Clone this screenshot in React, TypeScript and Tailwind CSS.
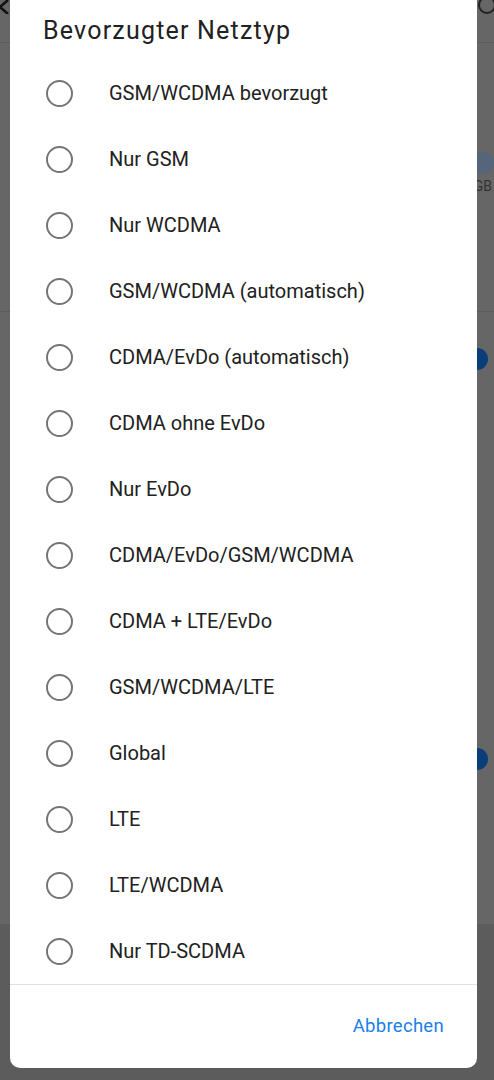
import React from 'react'

const options = [
  'GSM/WCDMA bevorzugt',
  'Nur GSM',
  'Nur WCDMA',
  'GSM/WCDMA (automatisch)',
  'CDMA/EvDo (automatisch)',
  'CDMA ohne EvDo',
  'Nur EvDo',
  'CDMA/EvDo/GSM/WCDMA',
  'CDMA + LTE/EvDo',
  'GSM/WCDMA/LTE',
  'Global',
  'LTE',
  'LTE/WCDMA',
  'Nur TD-SCDMA',
]

function Radio() {
  return (
    <span className="w-[27px] h-[27px] rounded-full border-[2.5px] border-[#757575] shrink-0" />
  )
}

export default function App() {
  return (
    <div
      className="relative w-[494px] h-[1080px] overflow-hidden bg-[#666666]"
      style={{ fontFamily: 'Roboto, "Liberation Sans", sans-serif' }}
    >
      {/* dimmed settings page behind the dialog */}
      <div className="flex flex-col h-full">
        <div className="h-[43px] flex items-start justify-between border-b border-[#5c5c5c]">
          <svg width="12" height="14" viewBox="0 0 12 14" className="ml-[-2px]">
            <path d="M10 0 L2 7 L10 14" fill="none" stroke="#111" strokeWidth="2.5" />
          </svg>
          <span className="w-[18px] h-[18px] rounded-full border-2 border-[#222] mt-[-4px] mr-[-2px]" />
        </div>
        <div className="h-[269px] border-b border-[#5c5c5c] flex flex-col items-end pt-[109px] pr-1">
          <span className="w-[22px] h-[22px] rounded-full bg-[#55657a] mr-[-4px]" />
          <span className="text-[#333] text-sm mt-[2px] mr-[-2px]">GB</span>
        </div>
        <div className="h-[613px] border-b border-[#5c5c5c] flex flex-col items-end pt-[36px]">
          <span className="w-[22px] h-[22px] rounded-full bg-[#0b3d78] mr-[6px]" />
          <span className="w-[22px] h-[22px] rounded-full bg-[#0b3d78] mr-[6px] mt-[378px]" />
        </div>
        <div className="flex-1 bg-[#5c5c5c]" />
      </div>

      {/* dialog */}
      <div className="absolute left-[10px] right-[17px] top-0 h-[1068px] bg-white rounded-b-[10px] flex flex-col">
        <div className="h-[60px] pl-[33px] pt-[14px] text-[25px] leading-[34px] tracking-[1.2px] text-[#212121]">
          Bevorzugter Netztyp
        </div>
        <div className="flex flex-col border-b border-[#e0e0e0]">
          {options.map((o) => (
            <div key={o} className="h-[66px] flex items-center pl-[36px]">
              <Radio />
              <span className="ml-[36px] text-[20px] text-[#212121]">{o}</span>
            </div>
          ))}
        </div>
        <div className="flex-1 flex items-center justify-end pr-[33px]">
          <span className="text-[18.5px] text-[#1a7fe8] tracking-[0.3px]">Abbrechen</span>
        </div>
      </div>
    </div>
  )
}
